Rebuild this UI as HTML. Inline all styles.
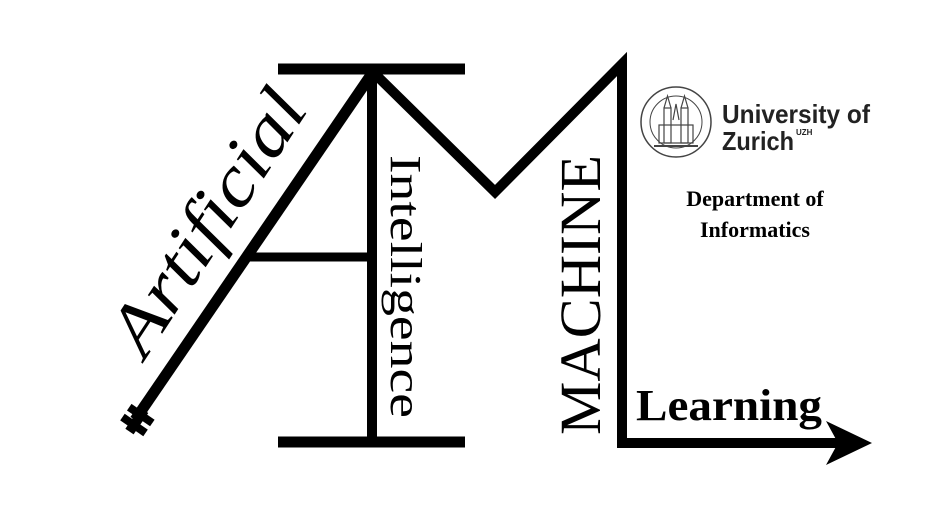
<!DOCTYPE html>
<html><head><meta charset="utf-8"><style>
html,body{margin:0;padding:0;background:#fff;}
svg{display:block}
</style></head><body>
<svg width="945" height="510" viewBox="0 0 945 510" xmlns="http://www.w3.org/2000/svg">
<g stroke="#000" fill="none">
 <line x1="278" y1="69" x2="465" y2="69" stroke-width="11"/>
 <line x1="278" y1="442" x2="465" y2="442" stroke-width="11"/>
 <line x1="372" y1="69" x2="372" y2="442" stroke-width="10"/>
 <line x1="245" y1="257" x2="372" y2="257" stroke-width="9"/>
 <line x1="373" y1="72" x2="135" y2="420" stroke-width="11"/>
 <polyline points="373,72 495,192 622,64 622,443 842,443" stroke-width="10" stroke-linejoin="miter"/>
</g>
<polygon points="826,421 872,443 826,465 838,443" fill="#000"/>
<g transform="translate(134,425) rotate(-55.6)" fill="#000">
 <rect x="-4" y="-14" width="8" height="28"/>
 <rect x="8" y="-14" width="8" height="28"/>
 <rect x="-8" y="-5" width="26" height="10"/>
</g>
<text transform="translate(145,360) rotate(-56.8)" font-family="Liberation Serif, serif" font-style="italic" font-size="72" textLength="300" lengthAdjust="spacingAndGlyphs">Artificial</text>
<text transform="translate(391,155) rotate(90)" font-family="Liberation Serif, serif" font-size="44" textLength="263" lengthAdjust="spacingAndGlyphs">Intelligence</text>
<text transform="translate(600,435) rotate(-90)" font-family="Liberation Serif, serif" font-size="58" textLength="280" lengthAdjust="spacingAndGlyphs">MACHINE</text>
<text x="636" y="420" font-family="Liberation Serif, serif" font-weight="bold" font-size="44" textLength="186" lengthAdjust="spacingAndGlyphs">Learning</text>
<g stroke="#444" fill="none">
 <circle cx="676" cy="122" r="35" stroke-width="1.5"/>
 <circle cx="676" cy="122" r="26" stroke-width="1"/>
 <rect x="664" y="108" width="7" height="35" stroke-width="1.2"/>
 <rect x="681" y="108" width="7" height="35" stroke-width="1.2"/>
 <rect x="659" y="125" width="34" height="18" stroke-width="1.2"/>
 <path d="M664 108 L667.5 96 L671 108 M681 108 L684.5 96 L688 108 M673 120 L676 104 L679 120" stroke-width="1.2"/>
 <path d="M654 146 H698" stroke-width="2"/>
</g>
<text x="722" y="123" font-family="Liberation Sans, sans-serif" font-weight="bold" font-size="26" fill="#222" textLength="148" lengthAdjust="spacingAndGlyphs">University of</text>
<text x="722" y="150" font-family="Liberation Sans, sans-serif" font-weight="bold" font-size="26" fill="#222" textLength="72" lengthAdjust="spacingAndGlyphs">Zurich</text>
<text x="796" y="135" font-family="Liberation Sans, sans-serif" font-weight="bold" font-size="8" fill="#222">UZH</text>
<text x="755" y="206" font-family="Liberation Serif, serif" font-weight="bold" font-size="22" text-anchor="middle">Department of</text>
<text x="755" y="237" font-family="Liberation Serif, serif" font-weight="bold" font-size="22" text-anchor="middle">Informatics</text>
</svg>
</body></html>
